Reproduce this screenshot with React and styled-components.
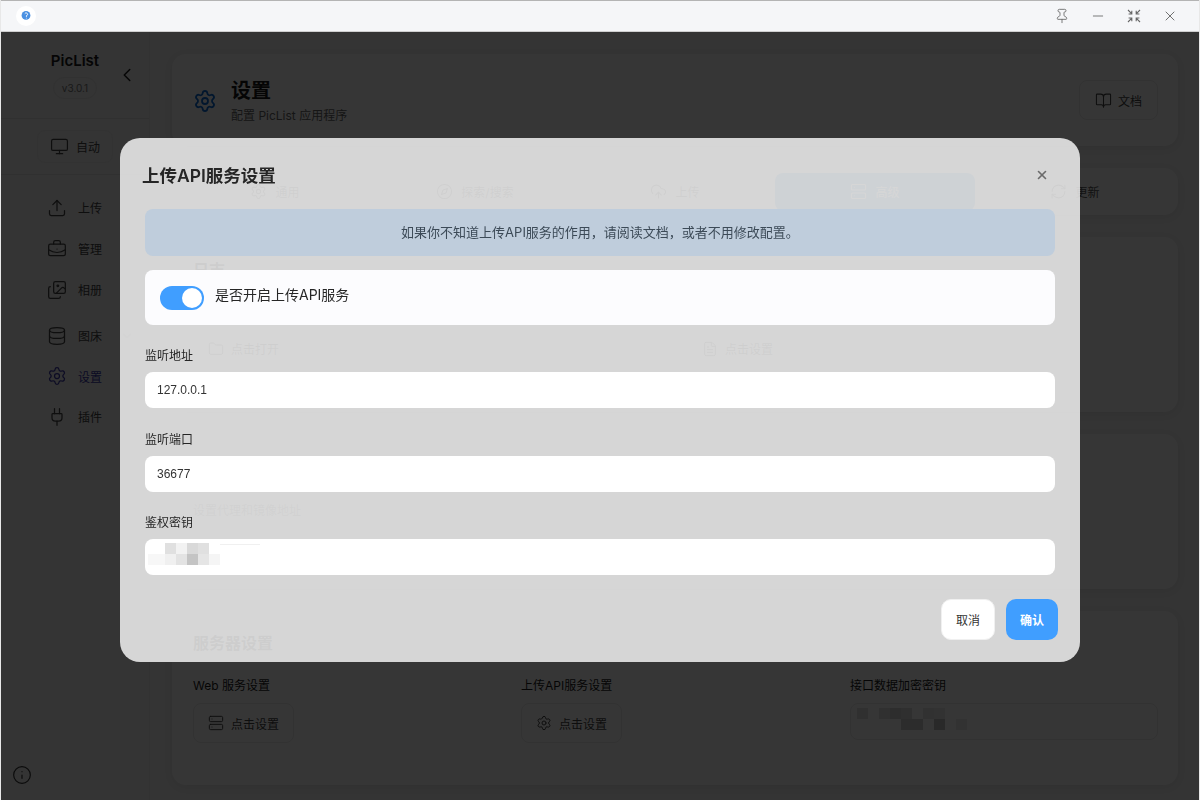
import React from 'react'
import styled, { createGlobalStyle } from 'styled-components'
import {
  BookOpen, BriefcaseBusiness, ChevronDown, ChevronLeft, CloudUpload, Compass, Database, FileText, Folder, Images,
  Info, Minus, Monitor, Pin, Plug, RefreshCw, Server, Settings, Upload, X
} from 'lucide-react'

const FONT = `Inter, 'Noto Sans CJK SC', sans-serif`

const GlobalStyle = createGlobalStyle`
  html, body, #root {
    margin: 0;
    height: 100%;
  }
  body {
    overflow: hidden;
    font-family: ${FONT};
    color: #1a1a1a;
  }
  * { box-sizing: border-box; }
`

const Win = styled.div`
  width: 1200px;
  height: 800px;
  display: flex;
  flex-direction: column;
  background: #f3f3f3;
  border-left: 1px solid #e8e8e8;
  border-right: 1px solid #e8e8e8;
`

const TitleBar = styled.header`
  height: 32px;
  flex: none;
  display: flex;
  align-items: center;
  padding: 0 16px 0 15px;
  background: #f5f6f8;
  border-top: 1px solid #b4b4b4;
  border-bottom: 1px solid #cfcfcf;
`

const Logo = styled.div`
  width: 20px;
  height: 20px;
  border-radius: 50%;
  background: #fff;
  display: flex;
  align-items: center;
  justify-content: center;
`

const WinButtons = styled.div`
  margin-left: auto;
  display: flex;
  align-items: center;
  gap: 20px;
  padding-right: 5px;
  color: #666;
`

const Body = styled.div`
  position: relative;
  flex: 1;
  min-height: 0;
  display: flex;
`

const Dim = styled.div`
  position: absolute;
  inset: 0;
  background: rgba(0, 0, 0, 0.79);
`

const Sidebar = styled.aside`
  width: 149px;
  flex: none;
  display: flex;
  flex-direction: column;
  border-right: 1px solid #e9e9e9;
`

const Brand = styled.div`
  position: relative;
  height: 87px;
  padding-top: 19px;
  display: flex;
  flex-direction: column;
  align-items: center;
  gap: 6px;
  border-bottom: 1px solid #e4e4e4;
`

const BrandName = styled.div`
  font-size: 15px;
  font-weight: 600;
  line-height: 20px;
`

const Version = styled.div`
  font-size: 10px;
  line-height: 20px;
  padding: 0 8px;
  color: #777;
  border: 1px solid #e6e6e6;
  border-radius: 11px;
`

const Collapse = styled.span`
  position: absolute;
  left: 115px;
  top: 32px;
  display: flex;
`

const ThemeRow = styled.div`
  height: 56px;
  display: flex;
  align-items: center;
  justify-content: center;
  border-bottom: 1px solid #e4e4e4;
`

const GhostButton = styled.div`
  height: ${p => p.$h || 33}px;
  display: inline-flex;
  align-items: center;
  gap: ${p => p.$gap || 7}px;
  padding: 0 ${p => p.$pad || 12}px;
  font-size: 12px;
  color: #444;
  border: 1px solid #ececec;
  border-radius: 8px;
`

const Nav = styled.nav`
  display: flex;
  flex-direction: column;
  padding: 12px 0 0 46px;
`

const NavItem = styled.div`
  height: ${p => p.$h || 41}px;
  display: flex;
  align-items: center;
  gap: 11px;
  font-size: 12px;
  color: ${p => (p.$active ? '#3a37a8' : '#444')};
`

const NavArrow = styled.span`
  margin-left: auto;
  margin-right: 15px;
  display: flex;
  color: #bbb;
`

const Foot = styled.div`
  margin-top: auto;
  padding: 0 0 15px 11px;
  display: flex;
  color: #333;
`

const Main = styled.main`
  flex: 1;
  min-width: 0;
  padding: 22px 21px 15px 22px;
  display: flex;
  flex-direction: column;
  gap: 22px;
`

const Card = styled.section`
  height: ${p => p.$h}px;
  flex: ${p => (p.$grow ? 1 : 'none')};
  padding: ${p => p.$pad || '22px 20px 20px 21px'};
  background: #fff;
  border-radius: 14px;
  box-shadow: 0 2px 8px rgba(0, 0, 0, 0.07);
`

const PageHead = styled.div`
  height: 100%;
  display: flex;
  align-items: center;
  gap: 14px;
`

const PageTitle = styled.h1`
  margin: 0 0 2px;
  font-size: 20px;
  line-height: 28px;
  font-weight: 700;
`

const PageSub = styled.p`
  margin: 0;
  font-size: 12px;
  line-height: 18px;
  color: #666;
`

const PushRight = styled.div`
  margin: 0 0 2px auto;
`

const Tabs = styled.div`
  height: 100%;
  display: grid;
  grid-template-columns: repeat(5, 1fr);
  align-items: center;
  padding: 0 3px;
`

const Tab = styled.div`
  height: 38px;
  display: flex;
  align-items: center;
  justify-content: center;
  gap: 8px;
  font-size: 12px;
  color: ${p => (p.$active ? '#fff' : '#555')};
  background: ${p => (p.$active ? '#3f8fe0' : 'transparent')};
  border-radius: 8px;
`

const SectionTitle = styled.h2`
  margin: 0 0 ${p => p.$mb}px;
  font-size: 16px;
  line-height: 22px;
  font-weight: 700;
`

const Hint = styled.p`
  margin: 46px 0 0;
  font-size: 12px;
  line-height: 18px;
  color: #777;
`

const ServerGrid = styled.div`
  display: grid;
  grid-template-columns: 328px 329px 308px;
`

const ServerLabel = styled.div`
  font-size: 12px;
  line-height: 18px;
  margin-bottom: 8px;
`

const MosaicBox = styled.div`
  height: 37px;
  display: flex;
  align-items: flex-start;
  padding: 4px 0 0 6px;
  border: 1px solid #ececec;
  border-radius: 8px;
`

const ButtonRow = styled.div`
  display: flex;
  gap: 393px;
`

const ModalLayer = styled.div`
  position: fixed;
  inset: 0;
  display: flex;
  align-items: center;
  justify-content: center;
`

const Dialog = styled.div`
  position: relative;
  width: 960px;
  padding: 0 25px 22px;
  background: rgba(255, 255, 255, 0.8);
  border-radius: 20px;
`

const DialogTitle = styled.h3`
  height: 71px;
  margin: 0 0 0 -3px;
  padding-top: 25px;
  font-size: 17.5px;
  line-height: 26px;
  font-weight: 600;
  color: #262626;
`

const Close = styled.span`
  position: absolute;
  right: 31px;
  top: 30px;
  display: flex;
  color: #6b6b6b;
`

const Banner = styled.div`
  height: 47px;
  display: flex;
  align-items: center;
  justify-content: center;
  padding-bottom: 2px;
  font-size: 13px;
  color: #3c4a57;
  background: #bfcddc;
  border-radius: 8px;
`

const SwitchRow = styled.div`
  height: 55px;
  margin-top: 14px;
  display: flex;
  align-items: center;
  gap: 11px;
  padding: 0 15px;
  font-size: 14px;
  color: #262626;
  background: #fcfcfe;
  border-radius: 8px;
`

const SwitchText = styled.span`
  margin-top: -7px;
`

const Toggle = styled.span`
  width: 44px;
  height: 24px;
  padding: 2px;
  display: flex;
  justify-content: flex-end;
  background: #409eff;
  border-radius: 12px;

  &::after {
    content: '';
    width: 20px;
    height: 20px;
    background: #fff;
    border-radius: 50%;
  }
`

const Form = styled.form`
  margin: 21px 0 0;
  display: flex;
  flex-direction: column;
  gap: 21.5px;
`

const Item = styled.div`
  display: flex;
  flex-direction: column;
  gap: 7px;
`

const Label = styled.label`
  padding-top: 1px;
  font-size: 12px;
  line-height: 18px;
  color: #262626;
`

const Input = styled.input`
  height: 36px;
  width: 100%;
  padding: 0 12px;
  font: 12px 'Liberation Sans', 'Noto Sans CJK SC', sans-serif;
  color: #333;
  background: #fff;
  border: none;
  border-radius: 8px;
  outline: none;
`

const SecretField = styled.div`
  height: 36px;
  display: flex;
  align-items: flex-start;
  padding: 4px 0 0 3px;
  background: #fff;
  border-radius: 8px;
`

const Footer = styled.div`
  margin: 24px -3px 0 0;
  display: flex;
  justify-content: flex-end;
  gap: 11px;
`

const Button = styled.button`
  width: ${p => (p.$primary ? 52 : 54)}px;
  height: 41px;
  padding: 0;
  font: ${p => (p.$primary ? 700 : 400)} 12px ${FONT};
  color: ${p => (p.$primary ? '#fff' : '#333')};
  background: ${p => (p.$primary ? '#409eff' : '#fff')};
  border: ${p => (p.$primary ? 'none' : '1px solid #f0f0f0')};
  border-radius: 10px;
`

// four arrows pointing inward, lucide has no such icon
const RestoreIcon = () => (
  <svg width="16" height="16" viewBox="-1 -1 16 16" fill="none" stroke="currentColor" strokeWidth="1.1">
    <path d="M1 1l3.6 3.6M1.6 5h3.2V1.8M13 1L9.4 4.6M12.4 5H9.2V1.8M1 13l3.6-3.6M1.6 9h3.2v3.2M13 13L9.4 9.4M12.4 9H9.2v3.2" />
  </svg>
)

const LogoIcon = () => (
  <svg width="12" height="12" viewBox="0 0 12 12">
    <circle cx="6" cy="5.4" r="4.4" fill="#4a90e2" />
    <path d="M4.8 3.6a1.5 1.4 0 1 1 1.6 2.1v1.1M6.4 7.8v.6" fill="none" stroke="#fff" strokeWidth="1" />
  </svg>
)

// pixelated blocks that hide a secret value in the screenshot
const Mosaic = ({ cells, offset = 0, children }) => (
  <svg width="130" height="22" viewBox="0 0 130 22">
    {cells.map(([col, row, o], i) => (
      <rect key={i} x={offset + col * 11} y={row * 11} width="11" height="11" fill="#000" opacity={o} />
    ))}
    {children}
  </svg>
)

const secretCells = [
  [1, 0, 0.12], [2, 0, 0.05], [3, 0, 0.15], [4, 0, 0.12],
  [-1, 1, 0.03], [0, 1, 0.03], [1, 1, 0.06], [2, 1, 0.11], [3, 1, 0.23], [4, 1, 0.1], [5, 1, 0.04]
]

const keyCells = [
  [0, 0, 0.12], [2, 0, 0.12], [3, 0, 0.16], [4, 0, 0.14], [6, 0, 0.1], [7, 0, 0.08],
  [4, 1, 0.18], [5, 1, 0.18], [7, 1, 0.25], [9, 1, 0.08]
]

const navItems = [
  { icon: Upload, label: '上传' },
  { icon: BriefcaseBusiness, label: '管理' },
  { icon: Images, label: '相册' },
  { icon: Database, label: '图床', h: 51 },
  { icon: Settings, label: '设置', active: true, h: 30 },
  { icon: Plug, label: '插件', h: 51 }
]

const tabs = [
  { icon: Settings, label: '通用' },
  { icon: Compass, label: '探索/搜索' },
  { icon: CloudUpload, label: '上传' },
  { icon: Server, label: '高级', active: true },
  { icon: RefreshCw, label: '更新' }
]

export default function App () {
  return (
    <Win>
      <GlobalStyle />
      <TitleBar>
        <Logo><LogoIcon /></Logo>
        <WinButtons>
          <Pin size={16} strokeWidth={1.3} />
          <Minus size={16} strokeWidth={1.3} />
          <RestoreIcon />
          <X size={16} strokeWidth={1.4} />
        </WinButtons>
      </TitleBar>
      <Body>
        <Sidebar>
          <Brand>
            <BrandName>PicList</BrandName>
            <Version>v3.0.1</Version>
            <Collapse><ChevronLeft size={22} strokeWidth={1.6} /></Collapse>
          </Brand>
          <ThemeRow>
            <GhostButton><Monitor size={19} strokeWidth={1.5} />自动</GhostButton>
          </ThemeRow>
          <Nav>
            {navItems.map(({ icon: Icon, label, active, h }) => (
              <NavItem key={label} $active={active} $h={h}>
                <Icon size={20} strokeWidth={1.5} />
                {label}
                {label === '图床' && <NavArrow><ChevronDown size={14} /></NavArrow>}
              </NavItem>
            ))}
          </Nav>
          <Foot><Info size={20} strokeWidth={1.4} /></Foot>
        </Sidebar>
        <Main>
          <Card $h={92}>
            <PageHead>
              <Settings size={24} color="#0a6bd6" strokeWidth={1.8} />
              <div>
                <PageTitle>设置</PageTitle>
                <PageSub>配置 PicList 应用程序</PageSub>
              </div>
              <PushRight>
                <GhostButton $h={40} $pad={15} $gap={6}><BookOpen size={17} strokeWidth={1.5} />文档</GhostButton>
              </PushRight>
            </PageHead>
          </Card>
          <Card $h={47} $pad="0">
            <Tabs>
              {tabs.map(({ icon: Icon, label, active }) => (
                <Tab key={label} $active={active}><Icon size={17} strokeWidth={1.5} />{label}</Tab>
              ))}
            </Tabs>
          </Card>
          <Card $h={175}>
            <SectionTitle $mb={51}>日志</SectionTitle>
            <ButtonRow>
              <GhostButton $pad={14}><Folder size={16} strokeWidth={1.5} />点击打开</GhostButton>
              <GhostButton $pad={14}><FileText size={16} strokeWidth={1.5} />点击设置</GhostButton>
            </ButtonRow>
          </Card>
          <Card $h={155}>
            <Hint>设置代理和镜像地址</Hint>
          </Card>
          <Card $grow $pad="21px 20px 20px 21px">
            <SectionTitle $mb={23}>服务器设置</SectionTitle>
            <ServerGrid>
              <div>
                <ServerLabel>Web 服务设置</ServerLabel>
                <GhostButton $h={40} $pad={14}><Server size={16} strokeWidth={1.5} />点击设置</GhostButton>
              </div>
              <div>
                <ServerLabel>上传API服务设置</ServerLabel>
                <GhostButton $h={40} $pad={14}><Settings size={16} strokeWidth={1.5} />点击设置</GhostButton>
              </div>
              <div>
                <ServerLabel>接口数据加密密钥</ServerLabel>
                <MosaicBox><Mosaic cells={keyCells} /></MosaicBox>
              </div>
            </ServerGrid>
          </Card>
        </Main>
        <Dim />
      </Body>
      <ModalLayer>
        <Dialog>
          <DialogTitle>上传API服务设置</DialogTitle>
          <Close><X size={14} strokeWidth={2.8} /></Close>
          <Banner>如果你不知道上传API服务的作用，请阅读文档，或者不用修改配置。</Banner>
          <SwitchRow><Toggle /><SwitchText>是否开启上传API服务</SwitchText></SwitchRow>
          <Form>
            <Item>
              <Label>监听地址</Label>
              <Input readOnly value="127.0.0.1" />
            </Item>
            <Item>
              <Label>监听端口</Label>
              <Input readOnly value="36677" />
            </Item>
            <Item>
              <Label>鉴权密钥</Label>
              <SecretField>
                <Mosaic cells={secretCells} offset={6}>
                  <rect x="72" y="1" width="40" height="1" fill="#000" opacity="0.06" />
                </Mosaic>
              </SecretField>
            </Item>
          </Form>
          <Footer>
            <Button>取消</Button>
            <Button $primary>确认</Button>
          </Footer>
        </Dialog>
      </ModalLayer>
    </Win>
  )
}
